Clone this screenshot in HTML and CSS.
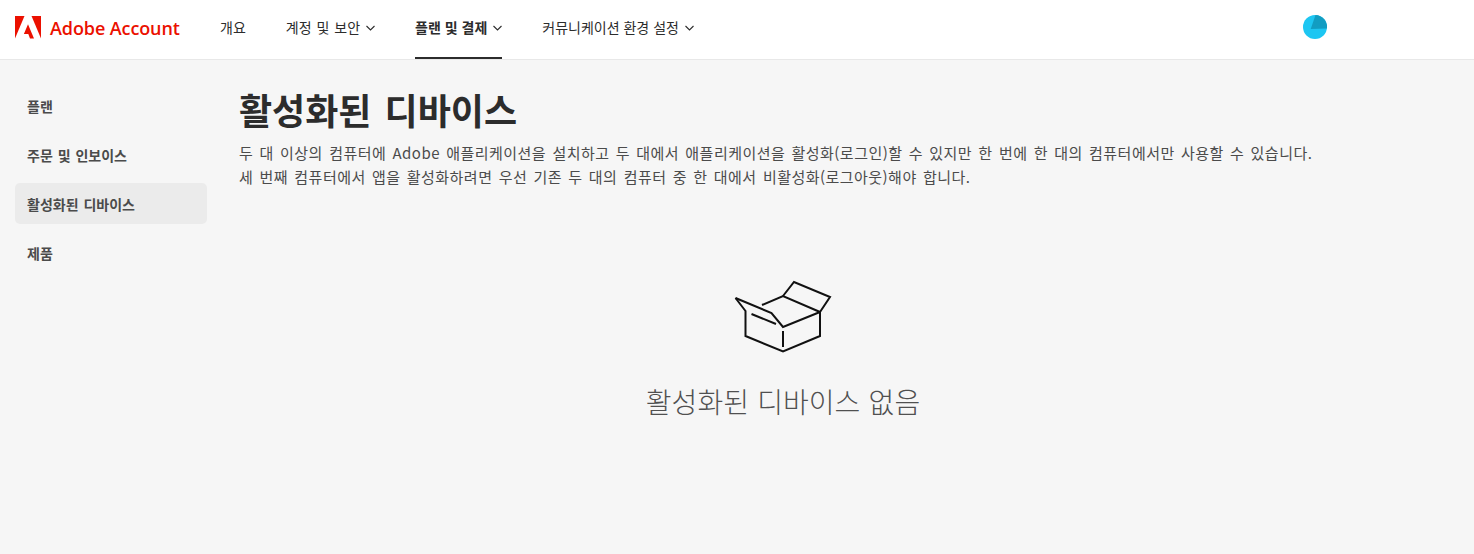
FILE: index.html
```html
<!DOCTYPE html>
<html lang="ko">
<head>
    <meta charset="UTF-8">
    <title>Adobe Account</title>
    <link rel="stylesheet" href="styles.css">
</head>
<body>
    <header class="header">
        <a class="brand" href="#">
            <svg class="brand-logo" viewBox="0 0 26 23" width="26" height="23">
                <path d="M0 0h9.5L0 22.5z"/>
                <path d="M16.5 0H26v22.5z"/>
                <path d="M13 8.2l6 14.3h-4l-1.7-4.5H8.9z"/>
            </svg>
            <span class="brand-name">Adobe Account</span>
        </a>
        <nav class="nav">
            <a class="nav-item" href="#">개요</a>
            <a class="nav-item" href="#">계정 및 보안
                <svg class="chevron" viewBox="0 0 9 6" width="9" height="6"><path d="M.5 1l4 4 4-4"/></svg>
            </a>
            <a class="nav-item active" href="#">플랜 및 결제
                <svg class="chevron" viewBox="0 0 9 6" width="9" height="6"><path d="M.5 1l4 4 4-4"/></svg>
            </a>
            <a class="nav-item" href="#">커뮤니케이션 환경 설정
                <svg class="chevron" viewBox="0 0 9 6" width="9" height="6"><path d="M.5 1l4 4 4-4"/></svg>
            </a>
        </nav>
        <svg class="avatar" viewBox="0 0 24 24" width="24" height="24">
            <circle cx="12" cy="12" r="12" fill="#1dc6f2"/>
            <path d="M7.7 14L12.5 0A12 12 0 0 1 24 13.5z" fill="#129dc2"/>
        </svg>
    </header>

    <div class="page">
        <aside class="sidebar">
            <a class="side-item" href="#">플랜</a>
            <a class="side-item" href="#">주문 및 인보이스</a>
            <a class="side-item selected" href="#">활성화된 디바이스</a>
            <a class="side-item" href="#">제품</a>
        </aside>

        <main class="content">
            <h1 class="title">활성화된 디바이스</h1>
            <p class="desc">두 대 이상의 컴퓨터에 Adobe 애플리케이션을 설치하고 두 대에서 애플리케이션을 활성화(로그인)할 수 있지만 한 번에 한 대의 컴퓨터에서만 사용할 수 있습니다.<br>세 번째 컴퓨터에서 앱을 활성화하려면 우선 기존 두 대의 컴퓨터 중 한 대에서 비활성화(로그아웃)해야 합니다.</p>

            <div class="empty">
                <svg class="empty-icon" viewBox="15 2 100 74" width="100" height="74">
                    <path d="M17.5 20L53.5 35 65 49 102 34"/>
                    <path d="M17.5 20L27.5 33V58L65 73.5 102 58V34"/>
                    <path d="M44 27L65 18 102 34"/>
                    <path d="M65 18L76 4 112 19 102 34"/>
                    <path d="M33.5 36L58 46"/>
                    <path d="M65 53V69"/>
                </svg>
                <div class="empty-text">활성화된 디바이스 없음</div>
            </div>
        </main>
    </div>
</body>
</html>
```

FILE: styles.css
```css
body {
    font-family: "Noto Sans CJK KR", "Noto Sans", sans-serif;
    margin: 0;
    background-color: #f6f6f6;
    color: #4b4b4b;
}

a {
    color: inherit;
    text-decoration: none;
}

.header {
    display: flex;
    align-items: center;
    height: 59px;
    padding-left: 15px;
    background-color: #fff;
    border-bottom: 1px solid #e8e8e8;
}

.brand {
    display: flex;
    align-items: center;
    gap: 9px;
    width: 205px;
    padding-bottom: 4px;
}

.brand-logo {
    fill: #eb1000;
}

.brand-name {
    font-family: "Open Sans", sans-serif;
    font-size: 18px;
    font-weight: 600;
    letter-spacing: -0.1px;
    color: #eb1000;
}

.nav {
    display: flex;
    align-self: stretch;
    width: 1083px;
}

.nav-item {
    display: flex;
    align-items: center;
    gap: 6px;
    height: 54px;
    padding-bottom: 3px;
    font-size: 14px;
    word-spacing: 1px;
    color: #2c2c2c;
    margin-right: 40px;
    border-bottom: 2px solid transparent;
    white-space: nowrap;
}

.nav-item:last-child {
    word-spacing: 0;
}

.nav-item.active {
    font-weight: 700;
    word-spacing: 0;
    border-bottom-color: #2c2c2c;
}

.chevron {
    margin-top: 2px;
    fill: none;
    stroke: #2c2c2c;
    stroke-width: 1.1;
}

.avatar {
    flex: none;
    margin-bottom: 5px;
}

.page {
    display: flex;
    height: 494px;
}

.sidebar {
    display: flex;
    flex-direction: column;
    gap: 8px;
    width: 192px;
    margin-left: 15px;
    padding-top: 25px;
}

.side-item {
    display: flex;
    align-items: center;
    height: 41px;
    padding-left: 12px;
    font-size: 14px;
    word-spacing: 1px;
    font-weight: 700;
    color: #4b4b4b;
    border-radius: 5px;
}

.side-item.selected {
    background-color: #ebebeb;
}

.content {
    width: 1088px;
    margin-left: 32px;
}

.title {
    margin: 25px 0 0;
    font-size: 36px;
    line-height: 48px;
    word-spacing: 3px;
    font-weight: 700;
    color: #2c2c2c;
}

.desc {
    margin: 8px 0 0;
    font-size: 15px;
    line-height: 24px;
    letter-spacing: 0.47px;
    word-spacing: 1.6px;
    color: #4b4b4b;
    white-space: nowrap;
}

.empty {
    display: flex;
    flex-direction: column;
    align-items: center;
    margin-top: 91px;
}

.empty-icon {
    overflow: visible;
    fill: none;
    stroke: #111;
    stroke-width: 2;
    stroke-linejoin: miter;
}

.empty-text {
    margin-top: 27px;
    font-size: 28px;
    line-height: 40px;
    word-spacing: 0.5px;
    font-weight: 300;
    color: #505050;
}
```
